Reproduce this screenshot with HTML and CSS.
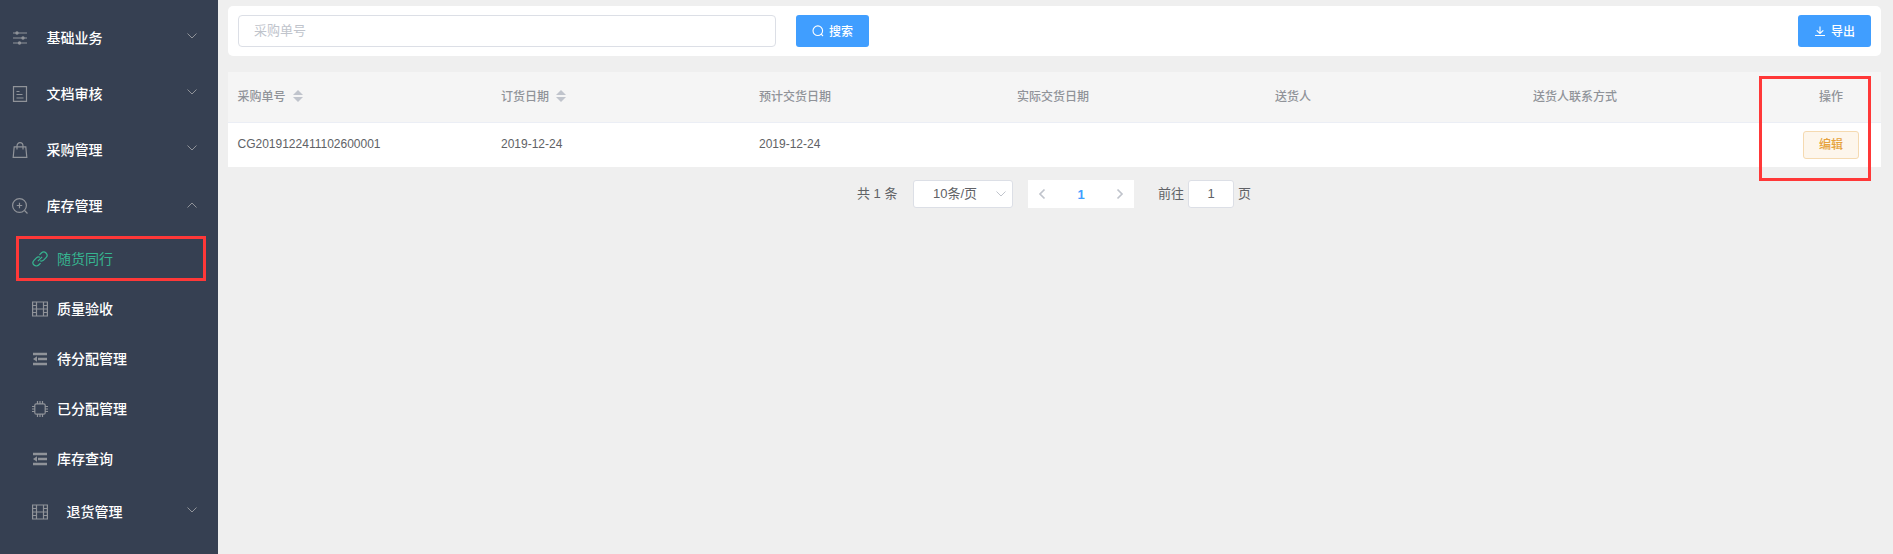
FILE: index.html
```html
<!DOCTYPE html>
<html lang="zh-CN">
<head>
<meta charset="utf-8">
<title>随货同行</title>
<link rel="stylesheet" href="styles.css">
</head>
<body>
<svg class="defs" width="0" height="0">
  <symbol id="down" viewBox="0 0 12 12"><path d="M1.5 3.5 6 8l4.5-4.5"/></symbol>
  <symbol id="film" viewBox="0 0 16 16"><path d="M.6 1h14.800v14H.6zM4.500 1v14M11.500 1v14M4.500 8h7M.5 4.500h4M.5 8h4M.5 11.500h4M11.500 4.500h4M11.500 8h4M11.500 11.500h4"/></symbol>
  <symbol id="fold" viewBox="0 0 16 16"><path class="thick" d="M1 3h14M6 8h9M1 13h14"/><path class="solid" d="M1 8l4-2.800v5.600z"/></symbol>
</svg>
<div class="layout">
  <nav class="sidebar">
    <div class="item"><svg class="icon" viewBox="0 0 16 16"><path d="M1 3h14M1 8h14M1 13h14"/><path class="solid" d="M3.300 3a1.700 1.700 0 1 0 3.400 0 1.700 1.700 0 1 0-3.400 0M9.300 8a1.700 1.700 0 1 0 3.400 0 1.700 1.700 0 1 0-3.400 0M5.800 13a1.700 1.700 0 1 0 3.400 0 1.700 1.700 0 1 0-3.400 0"/></svg><span>基础业务</span><svg class="arrow"><use href="#down"/></svg></div>
    <div class="item"><svg class="icon" viewBox="0 0 16 16"><path d="M1.500.7h13v14.600h-13zM4.500 5.500h3M4.500 8.500h6M4.500 12h7"/></svg><span>文档审核</span><svg class="arrow"><use href="#down"/></svg></div>
    <div class="item"><svg class="icon" viewBox="0 0 16 16"><path d="M2.200 4.800h11.600l1 10.500H1.200zM5 7.500V4a3 3.300 0 0 1 6 0v3.500"/></svg><span>采购管理</span><svg class="arrow"><use href="#down"/></svg></div>
    <div class="item"><svg class="icon" viewBox="0 0 16 16"><circle cx="7.500" cy="7.500" r="6.900"/><path d="M12.500 12.500l3 3M4.800 7.500h5.400M7.500 4.800v5.400"/></svg><span>库存管理</span><svg class="arrow up"><use href="#down"/></svg></div>
    <div class="sub active"><svg class="icon" viewBox="0 0 16 16"><g transform="rotate(-45 8 8)"><path d="M5.500 11.300H2.800a3.300 3.300 0 0 1 0-6.600h3.400a3.300 3.300 0 0 1 3 2M10.500 4.700h2.700a3.300 3.300 0 0 1 0 6.600H9.800a3.300 3.300 0 0 1-3-2M5 8h6"/></g></svg><span>随货同行</span></div>
    <div class="sub"><svg class="icon"><use href="#film"/></svg><span>质量验收</span></div>
    <div class="sub"><svg class="icon"><use href="#fold"/></svg><span>待分配管理</span></div>
    <div class="sub"><svg class="icon" viewBox="0 0 16 16"><rect x="2.800" y="2.800" width="10.400" height="10.400" rx="1.500"/><path d="M5.500 0v3M8 0v3M10.500 0v3M5.500 13v3M8 13v3M10.500 13v3M0 5.500h3M0 8h3M0 10.500h3M13 5.500h3M13 8h3M13 10.500h3"/></svg><span>已分配管理</span></div>
    <div class="sub"><svg class="icon"><use href="#fold"/></svg><span>库存查询</span></div>
    <div class="item nested"><svg class="icon"><use href="#film"/></svg><span>退货管理</span><svg class="arrow"><use href="#down"/></svg></div>
    <div class="mark mark-menu"></div>
  </nav>
  <main class="main">
    <section class="toolbar">
      <input class="search" type="text" placeholder="采购单号">
      <button class="btn"><svg viewBox="0 0 12 12"><circle cx="5.800" cy="5.700" r="4.800"/><path d="M9.200 9.200l1.800 1.800"/></svg><span>搜索</span></button>
      <button class="btn export"><svg viewBox="0 0 12 12"><path d="M1 10.500h10M6 1.500v7M2.700 5.300L6 8.500l3.300-3.200"/></svg><span>导出</span></button>
    </section>
    <section class="table">
      <div class="row head">
        <div class="sortable">采购单号<i class="sort"></i></div><div class="sortable">订货日期<i class="sort"></i></div><div>预计交货日期</div><div>实际交货日期</div><div>送货人</div><div>送货人联系方式</div><div class="op">操作</div>
      </div>
      <div class="row body">
        <div>CG2019122411102600001</div><div>2019-12-24</div><div>2019-12-24</div><div></div><div></div><div></div><div class="op"><button class="edit">编辑</button></div>
      </div>
      <div class="mark mark-op"></div>
    </section>
    <section class="pagination">
      <span class="total">共 1 条</span>
      <div class="size"><span>10条/页</span><svg class="arrow"><use href="#down"/></svg></div>
      <div class="pager"><svg class="prev"><use href="#down"/></svg><b>1</b><svg class="next"><use href="#down"/></svg></div>
      <span class="goto">前往</span><input class="page" value="1"><span class="unit">页</span>
    </section>
  </main>
</div>
</body>
</html>
```
FILE: styles.css
```css
* { box-sizing: border-box; }
body, button, input { font-family: "Liberation Sans", "Noto Sans CJK SC", sans-serif; }
body { margin: 0; background: #efefef; }
.defs { position: absolute; }
svg { fill: none; stroke: currentColor; stroke-width: 1; flex: none; }
.thick { stroke-width: 2.4; }
.solid { fill: currentColor; stroke: none; }
.layout { display: flex; height: 554px; overflow: hidden; }

.sidebar { position: relative; width: 218px; flex: none; padding-top: 10px; background: #364052; color: #fff; font-size: 14px; font-weight: 500; }
.item, .sub { display: flex; align-items: center; }
.item { height: 56px; padding: 0 20px 0 12px; }
.item span { margin-left: 18.5px; padding-bottom: 2px; }
.sub { height: 50px; padding-left: 32px; }
.sub span { margin-left: 9px; padding-bottom: 2px; }
.nested { padding-left: 32px; }
.icon { width: 16px; height: 16px; color: #909399; stroke-width: 1.2; }
.active { color: #36b590; font-weight: 400; }
.active .icon { color: #36b590; }
.item .arrow { width: 12px; height: 12px; margin: 0 0 4px auto; color: #909399; }
.item .up { transform: rotate(180deg); margin-bottom: 3px; }

.mark { position: absolute; border: 3px solid #ff3838; pointer-events: none; }
.mark-menu { left: 16px; top: 236px; width: 190px; height: 45px; }
.mark-op { right: 10px; top: 4px; width: 112px; height: 105px; }

.main { flex: 1; padding: 6px 12px 0 10px; }
.toolbar { display: flex; height: 50px; padding: 9px 10px; background: #fff; border-radius: 5px; }
.search { width: 538px; height: 32px; margin-right: 20px; padding: 0 15px 2px; border: 1px solid #dcdfe6; border-radius: 4px; font-size: 13px; }
.search::placeholder { color: #c0c4cc; }
.btn { display: flex; align-items: center; justify-content: center; gap: 5px; width: 73px; height: 32px; padding: 0; border: 0; border-radius: 3px; background: #409eff; color: #fff; font-size: 12px; font-weight: 500; }
.btn span { padding-bottom: 2px; }
.btn svg { width: 12px; height: 12px; stroke-width: 1.1; }
.export { margin-left: auto; }

.table { position: relative; margin-top: 16px; font-size: 12px; }
.row { display: grid; grid-template-columns: 263px repeat(5, 258px) 100px; align-items: center; }
.row > div { padding: 0 10px 2px; }
.row > .op { display: flex; justify-content: center; padding: 0 0 2px; }
.row > div:first-child { padding-left: 9.5px; }
.head { height: 51px; background: #f5f5f5; border-bottom: 1px solid #ebeef5; color: #909399; font-weight: 500; }
.head > div, .head > .op { padding-bottom: 3px; }
.body { height: 44px; background: #fff; color: #606266; }
.body > .op { padding: 0; }
.row > .sortable { display: flex; align-items: center; padding-bottom: 4px; }
.sort { display: grid; gap: 2px; margin: 2px 0 0 7px; }
.sort::before, .sort::after { content: ""; border: 5px solid transparent; }
.sort::before { border-top: 0; border-bottom-color: #c0c4cc; }
.sort::after { border-bottom: 0; border-top-color: #c0c4cc; }
.row .edit { width: 56px; height: 28px; padding: 0 0 2px; border: 1px solid #f5dab1; border-radius: 3px; background: #fdf6ec; color: #e6a23c; font-size: 12px; font-weight: 500; }
.body > .op { padding-bottom: 1px; }

.pagination { display: flex; align-items: center; height: 28px; margin: 13px 0 0 629px; color: #606266; font-size: 13px; }
.pagination span { padding-bottom: 3px; }
.total { width: 56px; white-space: nowrap; }
.size { display: flex; align-items: center; width: 100px; height: 28px; padding: 0 5px 0 19px; border: 1px solid #dcdfe6; border-radius: 3px; background: #fff; }
.size .arrow { width: 12px; height: 12px; margin-left: auto; color: #c0c4cc; }
.pager { display: flex; align-items: center; justify-content: space-between; width: 106px; height: 28px; margin: 0 24px 0 15px; padding: 0 8px; background: #fff; }
.pager svg { width: 12px; height: 12px; color: #c0c4cc; stroke-width: 1.7; }
.pager b { color: #409eff; }
.prev { transform: rotate(90deg); }
.next { transform: rotate(-90deg); }
.goto { width: 30px; }
.page { width: 46px; height: 28px; margin-right: 4px; padding: 0 0 2px; border: 1px solid #dcdfe6; border-radius: 3px; color: #606266; font-family: "Liberation Sans", sans-serif; font-size: 13px; text-align: center; }
```
